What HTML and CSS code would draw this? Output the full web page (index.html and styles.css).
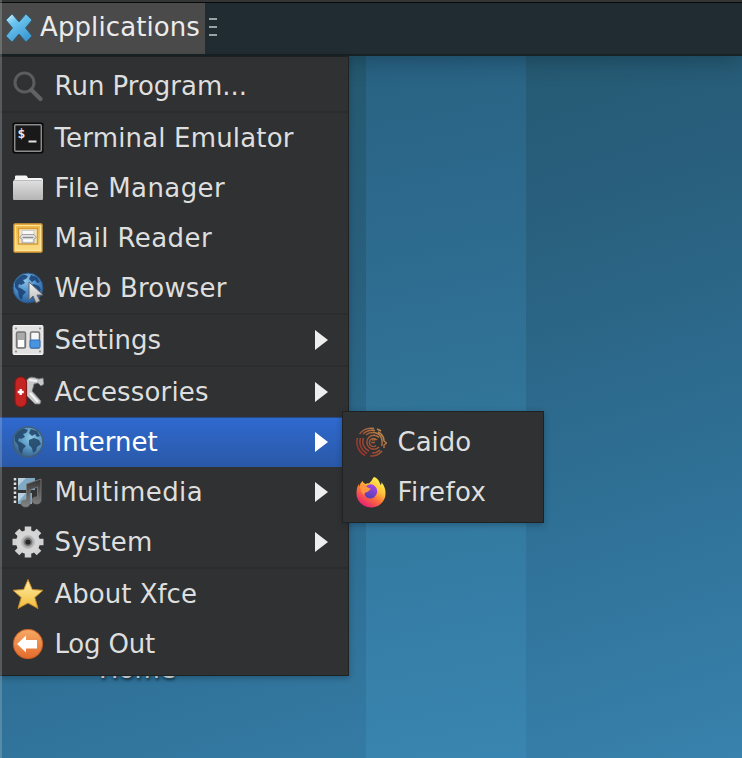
FILE: index.html
```html
<!DOCTYPE html>
<html lang="en">
<head>
<meta charset="utf-8">
<title>Desktop</title>
<link rel="stylesheet" href="styles.css">
</head>
<body>
<svg width="0" height="0" class="defs" aria-hidden="true">
  <defs>
    <linearGradient id="xg" x1="0" y1="0" x2="0.6" y2="1"><stop offset="0" stop-color="#d9f2fc"/><stop offset=".35" stop-color="#6cc5ee"/><stop offset="1" stop-color="#3d9bd3"/></linearGradient>
    <linearGradient id="fold" x1="0" y1="0" x2="0" y2="1"><stop offset="0" stop-color="#e0e0e0"/><stop offset="1" stop-color="#b4b4b4"/></linearGradient>
    <linearGradient id="gold" x1="0" y1="0" x2="0" y2="1"><stop offset="0" stop-color="#fff0a8"/><stop offset="1" stop-color="#f0bb3c"/></linearGradient>
    <linearGradient id="mail" x1="0" y1="0" x2="0" y2="1"><stop offset="0" stop-color="#f0b848"/><stop offset="1" stop-color="#fadf8a"/></linearGradient>
    <radialGradient id="sea" cx=".6" cy=".35" r=".65"><stop offset="0" stop-color="#8cc8e6"/><stop offset=".55" stop-color="#5a98c4"/><stop offset="1" stop-color="#3a6590"/></radialGradient>
    <radialGradient id="seaWeb" cx=".4" cy=".25" r=".75"><stop offset="0" stop-color="#8ec4ea"/><stop offset=".5" stop-color="#4d8fcb"/><stop offset="1" stop-color="#2b5f9c"/></radialGradient>
    <linearGradient id="silver" x1="0" y1="0" x2="0" y2="1"><stop offset="0" stop-color="#f4f4f4"/><stop offset="1" stop-color="#b8b8b8"/></linearGradient>
    <linearGradient id="note" x1="0" y1="0" x2="0" y2="1"><stop offset="0" stop-color="#333"/><stop offset="1" stop-color="#858585"/></linearGradient>
    <linearGradient id="org" x1="0" y1="0" x2="0" y2="1"><stop offset="0" stop-color="#f6a966"/><stop offset="1" stop-color="#e36b2c"/></linearGradient>
    <linearGradient id="cai" gradientUnits="userSpaceOnUse" x1="4" y1="26" x2="28" y2="6"><stop offset="0" stop-color="#98322e"/><stop offset=".5" stop-color="#a05636"/><stop offset="1" stop-color="#c08c50"/></linearGradient>
    <linearGradient id="fox" x1=".85" y1=".05" x2=".25" y2="1"><stop offset="0" stop-color="#fff44f"/><stop offset=".35" stop-color="#ffc23c"/><stop offset=".6" stop-color="#ff7139"/><stop offset="1" stop-color="#e3177b"/></linearGradient>
    <linearGradient id="vio" x1=".7" y1="0" x2=".3" y2="1"><stop offset="0" stop-color="#a844e8"/><stop offset="1" stop-color="#5040b0"/></linearGradient>
    <g id="land">
      <path d="M3 10Q6 4 12 2.500L16 4L14 7L11 8L13 11L9 13L7 12L6 15L10 17L14 20L11 23L10 28L7 25L6 19L3 15Z"/>
      <path d="M19 3L25 5L28 10L25 11L23 8L20 10L17 7Z"/>
      <path d="M17 14L22 12L27 14L29 18L25 21L24 25L21 27L20 22L17 19Z"/>
    </g>
  </defs>
</svg>
<div class="desktop">
  <div class="band"></div>
  <div class="shortcut">Home</div>
  <header class="panel">
    <button class="apps">
      <svg class="logo" viewBox="0 0 28 30"><path d="M7 1L14 9L21 1L27 7L20.500 15L27 23L21 29L14 21L7 29L1 23L7.500 15L1 7Z" fill="url(#xg)" stroke="#2d5875" stroke-width=".8"/></svg>
      <span>Applications</span>
    </button>
    <div class="grip"><i></i><i></i><i></i></div>
  </header>
  <nav class="menu">
    <div class="item"><svg viewBox="0 0 32 32"><circle cx="12.500" cy="12.500" r="9.500" fill="none" stroke="#5c5c5c" stroke-width="3"/><path d="M19.500 20L28.500 29" stroke="#626262" stroke-width="4.200" stroke-linecap="round"/></svg><span>Run Program...</span></div>
    <hr>
    <div class="item"><svg viewBox="0 0 32 32"><rect x=".5" y=".5" width="31" height="31" rx="2" fill="#090909"/><rect x="2.700" y="2.700" width="26.600" height="26.600" rx="1" fill="#191919" stroke="#8c8c8c" stroke-width="1.500"/><text x="5.500" y="16" class="dollar">$</text><path d="M16.500 19.500H24.500" stroke="#e2e2e2" stroke-width="2"/></svg><span class="wide">Terminal Emulator</span></div>
    <div class="item"><svg viewBox="0 0 32 32"><path d="M3 7V4.500Q3 3.500 4 3.500H14Q15 3.500 15.500 5L16 6H29Q31 6 31 8V12H2V8Z" fill="#f5f5f5"/><path d="M1 9.500Q1 8.500 2 8.500H30Q31 8.500 31 9.500V27Q31 28 30 28H2Q1 28 1 27Z" fill="url(#fold)"/><path d="M2 8.500H30" stroke="#bdbdbd"/></svg><span class="wider">File Manager</span></div>
    <div class="item"><svg viewBox="0 0 32 32"><rect x="2" y="2" width="28" height="28" rx="1" fill="url(#mail)" stroke="#e0a338" stroke-width="1.300"/><path d="M3.500 3.500H28.500V28.500H3.500Z" fill="none" stroke="#fbe39a"/><rect x="6.500" y="6.500" width="19" height="15.500" fill="#f3e6c0" stroke="#d89c34" stroke-width="1.500"/><rect x="10" y="8.500" width="12" height="5" fill="#f8f8f8" stroke="#c4c4c4" stroke-width=".8"/><path d="M10 12.500H22L24.500 15.500L22 17V21H10V17L7.500 15.500Z" fill="#e4e4e4" stroke="#999" stroke-width=".9"/><path d="M10.500 15.500H21.500" stroke="#8d8d8d" stroke-width="1.400"/><path d="M11.500 18.500H20.500" stroke="#fff" stroke-width="2"/></svg><span class="wider">Mail Reader</span></div>
    <div class="item"><svg viewBox="0 0 32 32"><circle cx="16" cy="16" r="15" fill="url(#seaWeb)" stroke="#2b5583"/><use href="#land" fill="#1d4577" opacity=".9"/><path d="M17 10V28L21 24L24 31L28 29L25 23H31Z" fill="url(#silver)" stroke="#666" stroke-width="1"/></svg><span class="wide">Web Browser</span></div>
    <hr>
    <div class="item"><svg viewBox="0 0 32 32"><rect x="1" y="1.500" width="30" height="29" rx="1" fill="#e2e2e2" stroke="#f4f4f4"/><g fill="#888"><circle cx="4" cy="4.500" r="1"/><circle cx="28" cy="4.500" r="1"/><circle cx="4" cy="27.500" r="1"/><circle cx="28" cy="27.500" r="1"/></g><rect x="4.500" y="8" width="9" height="16" rx="1.500" fill="#aaa" stroke="#777" stroke-width="1.500"/><rect x="6" y="16" width="6" height="7" fill="#fff"/><rect x="18.500" y="8" width="9" height="16" rx="1.500" fill="#f7f7f7" stroke="#777" stroke-width="1.500"/><rect x="18" y="16" width="10" height="8" rx="1" fill="#4a93df" stroke="#2c6eb8"/></svg><span>Settings</span><b></b></div>
    <hr>
    <div class="item"><svg viewBox="0 0 32 32"><path d="M14 5Q17 0 22 1.500L27 3L31 2L32 8L29 10L26 7L22 8L21 12L20 15L29 25L28 28H23L13 18Z" fill="#c8c8c8" stroke="#777" stroke-width=".8"/><path d="M17 4L25 5M18 17L26 26" stroke="#f4f4f4" stroke-width="2"/><rect x="3" y="1" width="11.500" height="30" rx="5.500" fill="#c42522" stroke="#811a18" stroke-width="1.200"/><path d="M8.700 13V19M5.700 16H11.700" stroke="#fff" stroke-width="2.300"/></svg><span class="wide">Accessories</span><b></b></div>
    <div class="item selected"><svg viewBox="0 0 32 32"><circle cx="16" cy="16" r="15" fill="url(#sea)" stroke="#3f5f7c" stroke-width="1.600"/><use href="#land" fill="#24486a" opacity=".9"/></svg><span>Internet</span><b></b></div>
    <div class="item"><svg viewBox="0 0 32 32"><path d="M1 1H24V29H1Z" fill="#333"/><path d="M6 2H23V14H6ZM6 17H20V28H6Z" fill="#80a9c4"/><path d="M6 2H14L6 10ZM6 17H14L6 26Z" fill="#b6d0df"/><path d="M3 2V29" stroke="#ddd" stroke-width="2.500" stroke-dasharray="2.500 2"/><path d="M14.500 8L29 3V24A4.500 3.500 0 1 1 25.500 21V11L18 14V27A4.500 3.500 0 1 1 14.500 24Z" fill="url(#note)" stroke="#777" stroke-width=".9"/></svg><span class="wider">Multimedia</span><b></b></div>
    <div class="item"><svg viewBox="0 0 32 32"><g stroke="#d2d2d2" stroke-width="6.500"><path d="M16 .5V31.500M.5 16H31.500M5 5L27 27M27 5L5 27"/></g><circle cx="16" cy="16" r="12" fill="#d6d6d6"/><circle cx="16" cy="16" r="6.500" fill="#b0b0b0" stroke="#c2c2c2"/><circle cx="16" cy="16" r="3.500" fill="#292929" stroke="#777" stroke-width="1.800"/></svg><span class="wide">System</span><b></b></div>
    <hr>
    <div class="item"><svg viewBox="0 0 32 32"><path d="M16 1.500L20.300 11.500L31 12.300L22.800 19.500L26 30.500L16 25L6 30.500L9.200 19.500L1 12.300L11.700 11.500Z" fill="url(#gold)" stroke="#c58a28" stroke-width="1" stroke-linejoin="round"/></svg><span>About Xfce</span></div>
    <div class="item"><svg viewBox="0 0 32 32"><circle cx="16" cy="16" r="14.700" fill="url(#org)" stroke="#c65c25"/><path d="M5 16L14 7.500V12H25V20.500H14V24.500Z" fill="#fff"/></svg><span class="tight">Log Out</span></div>
  </nav>
  <nav class="menu submenu">
    <div class="item"><svg viewBox="0 0 32 32"><g fill="none" stroke="url(#cai)" stroke-width="1.500"><path d="M21 19.500A4 4 0 1 1 21 13.500L17 14M20 16.500H16M24 21A7 7 0 1 1 24 11.500M14 25A10 10 0 0 1 8.500 12M11 9A10 10 0 0 1 26 11Q28 16 26.500 20M25 24A11 11 0 0 1 17 27M12 27.500A13 13 0 0 1 5.500 12M8 8A13 13 0 0 1 20 4.500M23 6Q29 9 29 15L31.500 17L29 19V22M27 25A14 14 0 0 1 15 30M10 29.500A15 15 0 0 1 2.500 12M4.500 8Q10 1 19 2.500M22 3L26 5"/></g></svg><span>Caido</span></div>
    <div class="item"><svg viewBox="0 0 32 32"><path d="M19.500 1Q24 3 25.500 9Q27 8 26.500 6Q31 12 30.500 18A14.500 14 0 0 1 1.500 17Q1.500 11 4 8L4.500 11Q5 7 7.500 5Q8 7 10.500 8Q13 7 14 7.500Q16 5 17 4Q18 1 19.500 1Z" fill="url(#fox)"/><path d="M10 11Q14 7 18.500 9Q23 12 22 17Q20 22.500 15 22.500Q10 22 9.500 17L14 15Z" fill="url(#vio)"/><path d="M5 10Q10 7 12 11L16 13L12 16Q9 16 9 19Q5 15 5 10Z" fill="#ff9640"/></svg><span class="wider">Firefox</span></div>
  </nav>
  <div class="top-edge"></div>
  <div class="left-edge"></div>
</div>
</body>
</html>
```
FILE: styles.css
```css
body { margin: 0; overflow: hidden; font-family: "DejaVu Sans", sans-serif; font-size: 26px; }
.defs { position: absolute; }
.desktop {
  position: relative;
  width: 742px;
  height: 758px;
  overflow: hidden;
  background: linear-gradient(163deg, #20506a 0%, #25586f 15%, #29607e 40%, #2f7096 70%, #3882ad 100%);
}
.band {
  position: absolute;
  left: 366px;
  top: 0;
  width: 160px;
  height: 758px;
  background: linear-gradient(170deg, #286080 0%, #2d6a8d 30%, #32779c 60%, #3985b1 100%);
}
.panel {
  position: relative;
  display: flex;
  box-sizing: border-box;
  height: 56px;
  padding-top: 3px;
  border-bottom: 2px solid #182123;
  background: #202c31;
  box-shadow: 0 2px 26px rgba(0, 25, 35, .4);
}
.apps {
  display: flex;
  align-items: center;
  box-sizing: border-box;
  width: 205px;
  height: 51px;
  padding: 0 0 0 5px;
  border: 0;
  gap: 7px;
  font: inherit;
  letter-spacing: .1px;
  color: #ececec;
  background: #4a4a4a;
}
.apps span { position: relative; top: -2px; }
.logo { width: 28px; height: 30px; flex: none; margin-top: -1px; }
.grip { display: flex; flex-direction: column; gap: 6px; padding: 15px 0 0 4px; }
.grip i { width: 8px; height: 2px; background: #9ba2a3; }
.menu {
  position: absolute;
  left: 0;
  top: 56px;
  box-sizing: border-box;
  width: 349px;
  height: 620px;
  padding: 4px 6px 0 0;
  border: 1px solid #1e2223;
  border-left: 0;
  background: #303132;
  box-shadow: 0 2px 6px rgba(0, 20, 30, .3);
}
.menu hr { height: 2px; margin: 0 -6px 0 0; border: 0; background: #2b2c2d; }
.item {
  display: flex;
  align-items: center;
  height: 50px;
  padding: 0 14px 0 12px;
  box-sizing: border-box;
  gap: 10px;
  color: #dedede;
  white-space: nowrap;
}
.item svg { width: 32px; height: 32px; flex: none; }
.item span { flex: 1; padding-left: .5px; }
.item .wide { letter-spacing: .16px; }
.item .wider { letter-spacing: .4px; }
.item .tight { letter-spacing: -.2px; }
.item b {
  width: 0;
  height: 0;
  border: solid transparent;
  border-width: 10.5px 0 10.5px 13px;
  border-left-color: #eee;
}
.selected {
  color: #fff;
  background: linear-gradient(#2f6ad0, #2a58a6);
  box-shadow: inset 0 1px #254986;
}
.selected b { border-left-color: #fff; }
.submenu {
  left: 342px;
  top: 411px;
  width: 202px;
  height: 112px;
  padding: 5px 0;
  border-left: 1px solid #1e2223;
}
.dollar { font: bold 13px "DejaVu Sans Mono", monospace; fill: #e8e8e8; }
.shortcut {
  position: absolute;
  left: 99px;
  top: 649px;
  line-height: 40px;
  color: #e8e8e8;
  text-shadow: 1px 2px 3px #102d3c;
}
.top-edge { position: absolute; top: 0; left: 0; width: 742px; height: 2px; background: #343635; border-bottom: 1px solid #080909; }
.left-edge { position: absolute; top: 0; left: 0; width: 2px; height: 758px; background: rgba(190, 200, 205, .28); }
```
